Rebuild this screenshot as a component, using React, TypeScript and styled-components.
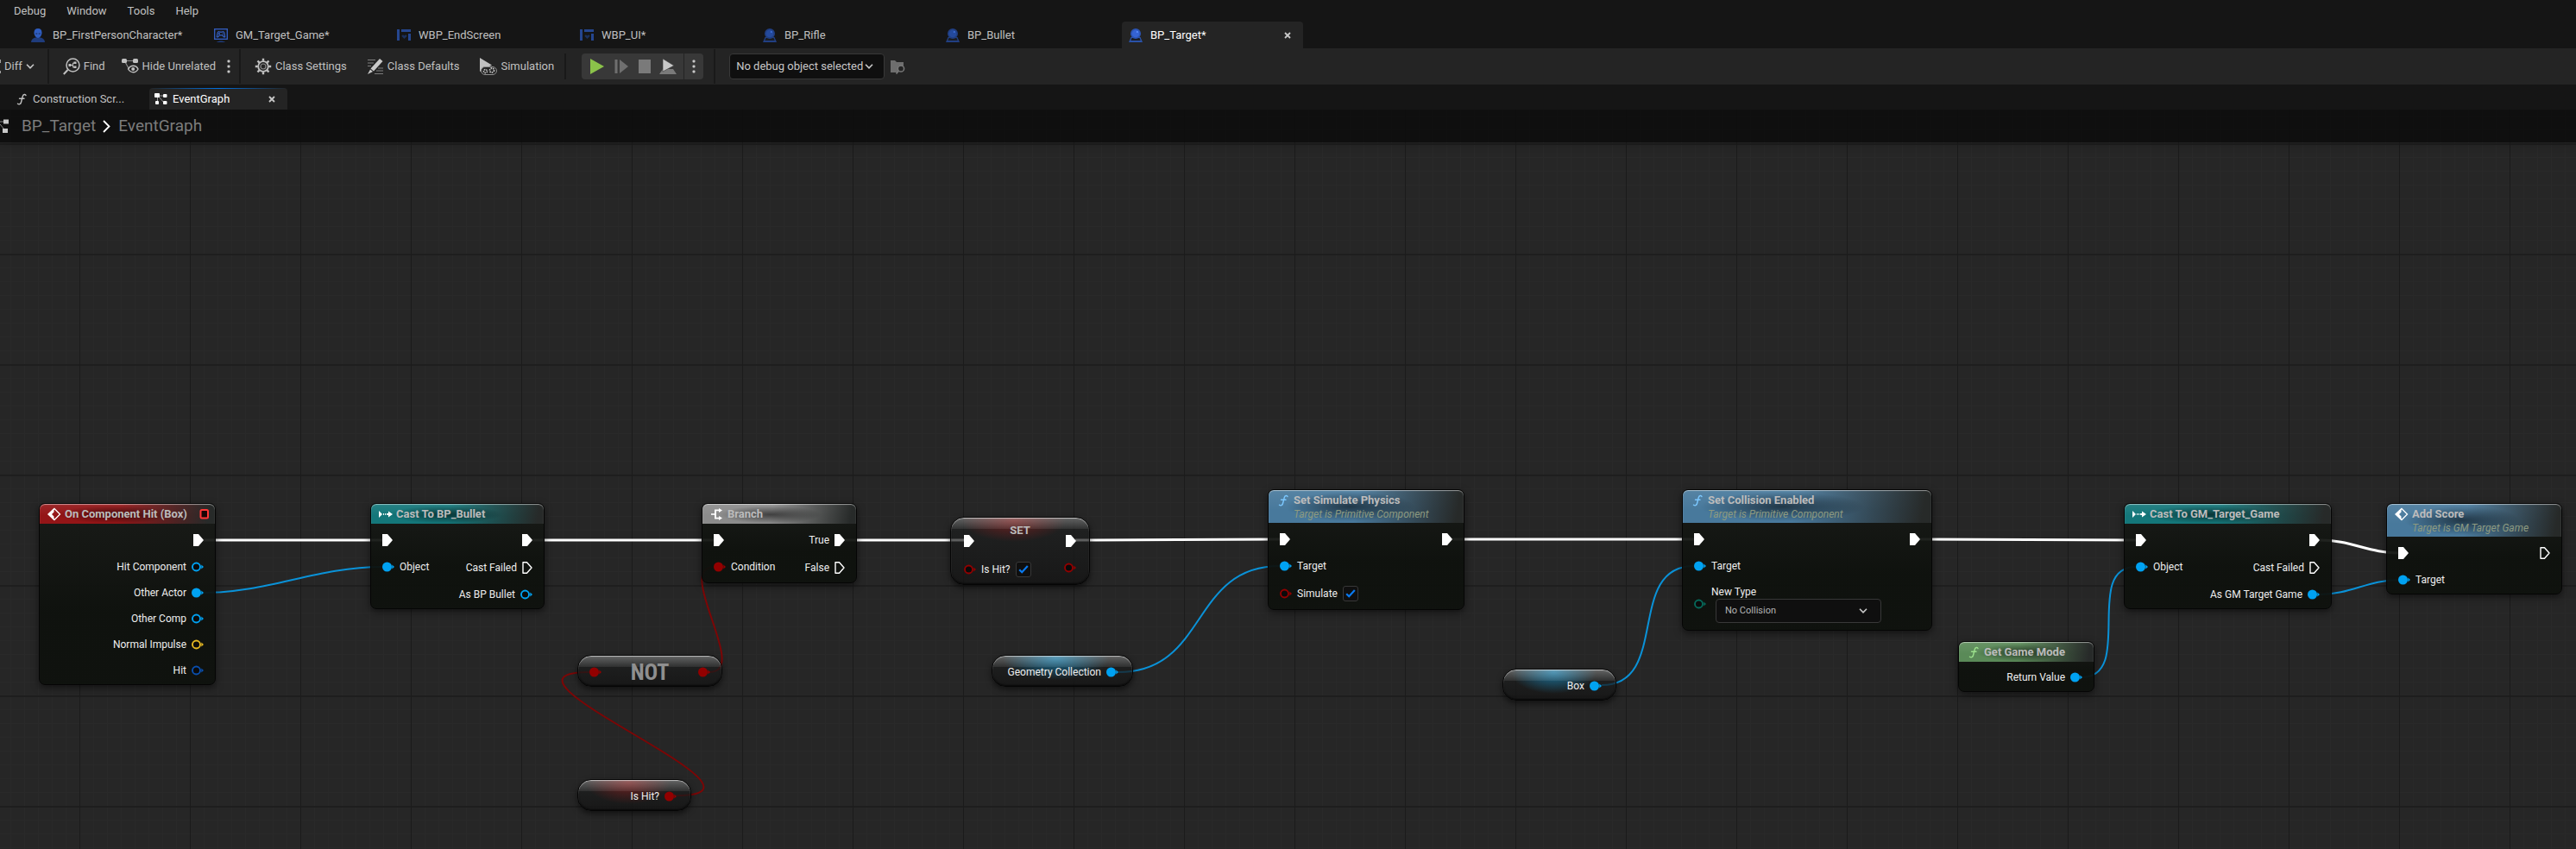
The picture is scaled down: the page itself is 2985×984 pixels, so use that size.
import React, { useId, useState } from "react";
import styled, { createGlobalStyle, css } from "styled-components";

const GlobalStyle = createGlobalStyle`
  *, *::before, *::after { box-sizing: border-box; }
  body {
    margin: 0;
    background: #151515;
    color: #c0c0c0;
    font: 13px/16px Roboto, "Liberation Sans", sans-serif;
  }
  button, input, select { font: inherit; color: inherit; }
`;

/* ---------- shell ---------- */

const Page = styled.div`
  display: flex;
  flex-direction: column;
  min-height: 100vh;
`;

const PlainButton = styled.button`
  display: flex;
  align-items: center;
  flex: none;
  padding: 0;
  border: 0;
  background: none;
  white-space: nowrap;
  cursor: pointer;
`;

const MenuBar = styled.nav`
  display: flex;
  align-items: center;
  gap: 24px;
  height: 25px;
  padding-left: 16px;
`;

const DocumentTabs = styled.div`
  display: flex;
  gap: 2px;
  height: 31px;
  padding-left: 28px;
`;

const DocumentTab = styled.div<{ $active?: boolean }>`
  display: flex;
  align-items: center;
  justify-content: space-between;
  width: 210px;
  padding: 0 14px 0 8px;
  border-radius: 4px 4px 0 0;
  background: ${(p) => (p.$active ? "#242424" : "transparent")};
  color: ${(p) => (p.$active ? "#ffffff" : "#c0c0c0")};
`;

const DocumentTabButton = styled(PlainButton)`
  gap: 9px;
`;

const Toolbar = styled.div`
  display: flex;
  align-items: center;
  height: 42px;
  background: #242424;
`;

const Divider = styled.span<{ $short?: boolean }>`
  flex: none;
  width: 2px;
  height: ${(p) => (p.$short ? 30 : 40)}px;
  background: #191919;
`;

const ToolGroup = styled.div<{ $gap: number; $left?: number; $right?: number }>`
  display: flex;
  align-items: center;
  gap: ${(p) => p.$gap}px;
  padding: 0 ${(p) => p.$right ?? 0}px 0 ${(p) => p.$left ?? 0}px;
`;

const ToolButton = styled(PlainButton)`
  gap: 4px;
`;

const PlayGroup = styled.div`
  display: flex;
  align-items: center;
  height: 30px;
  margin: 0 12px 0 18px;
  border-radius: 4px;
  background: #383838;
`;

const PlayButtons = styled.div`
  display: flex;
  align-items: center;
  gap: 8px;
  width: 118px;
  height: 30px;
  padding-left: 8px;
`;

const PlayMore = styled(PlainButton)`
  justify-content: center;
  width: 23px;
  height: 30px;
  border-left: 1px solid #242424;
`;

const SelectBox = styled.span<{ $compact?: boolean }>`
  display: grid;
  align-items: center;
  flex: none;
  width: ${(p) => (p.$compact ? 192 : 180)}px;

  > * { grid-area: 1 / 1; }
  > svg {
    justify-self: end;
    margin-right: ${(p) => (p.$compact ? 16 : 13)}px;
    pointer-events: none;
  }
`;

const Select = styled.select<{ $compact?: boolean }>`
  appearance: none;
  width: 100%;
  height: ${(p) => (p.$compact ? 28 : 30)}px;
  padding: 0 0 0 ${(p) => (p.$compact ? 10 : 7)}px;
  border: 1px solid #383838;
  border-radius: 4px;
  background: #0f0f0f;
  color: ${(p) => (p.$compact ? "#b4b4b4" : "#c8c8c8")};
  font-size: ${(p) => (p.$compact ? 11 : 13)}px;
`;

const GraphTabs = styled.div`
  display: flex;
  align-items: flex-end;
  gap: 2px;
  height: 29px;
  padding-left: 11px;
`;

const GraphTab = styled.div<{ $active?: boolean }>`
  display: flex;
  align-items: center;
  justify-content: space-between;
  width: 160px;
  height: 25px;
  padding: 0 14px 0 6px;
  border-radius: 4px 4px 0 0;
  color: ${(p) => (p.$active ? "#ffffff" : "#c0c0c0")};
  ${(p) =>
    p.$active &&
    css`
      background:
        linear-gradient(to right, transparent, #0070e0 50%, transparent) top / 100% 1px no-repeat,
        #242424;
    `}
`;

const GraphTabButton = styled(PlainButton)`
  gap: 5px;
`;

/* ---------- graph ---------- */

const Graph = styled.main`
  position: relative;
  flex: 1;
  overflow: hidden;
  background:
    linear-gradient(to right, #1b1b1b 1px, transparent 1px) 92px 0 / 128px 128px,
    linear-gradient(to bottom, #1e1e1e 2px, transparent 2px) 0 39px / 128px 128px,
    linear-gradient(to right, #292929 1px, transparent 1px) 12px 0 / 16px 16px,
    linear-gradient(to bottom, #292929 1px, transparent 1px) 0 7px / 16px 16px,
    #262626;
`;

const Breadcrumb = styled.nav`
  display: flex;
  align-items: center;
  height: 38px;
  background: rgba(13, 13, 13, 0.9);
  box-shadow: 0 1px 12px rgba(0, 0, 0, 0.2);
  font-size: 19px;
  line-height: 22px;

  a {
    color: #7c7c7c;
    text-decoration: none;
  }
  a:first-of-type { padding-left: 15px; }
  > svg:last-of-type { margin: 0 9px 0 8px; }
`;

const Wires = styled.svg`
  position: absolute;
  inset: 0;
  width: 100%;
  height: 100%;
  pointer-events: none;
`;

type Box = { $x: number; $y: number; $w: number };

const onCanvas = css<Box>`
  position: absolute;
  left: ${(p) => p.$x}px;
  top: ${(p) => p.$y}px;
  width: ${(p) => p.$w}px;
  border: 1px solid #050505;
  color: #eeeeee;
  font-size: 12px;
`;

const NodeFrame = styled.article<Box>`
  ${onCanvas}
  padding-bottom: 1px;
  border-radius: 7px;
  background: linear-gradient(to bottom, rgba(24, 26, 23, 0.93), rgba(14, 17, 13, 0.95) 60%);
  box-shadow: 0 3px 8px rgba(0, 0, 0, 0.5);
`;

const NodeHeader = styled.header<{ $tint: string; $tall?: boolean }>`
  display: flex;
  align-items: flex-start;
  gap: 4px;
  height: ${(p) => (p.$tall ? 38 : 23)}px;
  padding: 4px 6px 0 9px;
  border-radius: 6px 6px 0 0;
  background:
    radial-gradient(closest-side, rgba(0, 0, 0, 0.55), transparent) 20px 2px / 66% 90% no-repeat,
    linear-gradient(100deg, transparent 45%, #272a29 96%),
    linear-gradient(to bottom, rgba(255, 255, 255, 0.08), transparent 60%),
    ${(p) => p.$tint};
  box-shadow: inset 0 1px 1px rgba(255, 255, 255, 0.5);

  > svg { flex: none; }
`;

const Titles = styled.div`
  flex: 1;
  white-space: nowrap;
`;

const Title = styled.h2`
  margin: 0;
  color: #bcbcbc;
  font-size: 13px;
  font-weight: 700;
  line-height: 16px;
`;

const Subtitle = styled.p`
  margin: 0;
  color: #8d9a80;
  font-size: 12px;
  font-style: italic;
  line-height: 16px;
`;

const NodeBody = styled.div<{ $pad?: number }>`
  display: flex;
  justify-content: space-between;
  padding: 3px ${(p) => p.$pad ?? 13}px 0;
`;

const PinColumn = styled.div<{ $out?: boolean }>`
  display: flex;
  flex-direction: column;
  align-items: ${(p) => (p.$out ? "flex-end" : "flex-start")};
`;

const PinRow = styled.div<{ $h: number }>`
  display: flex;
  align-items: center;
  gap: 6px;
  height: ${(p) => p.$h}px;
  white-space: nowrap;

  > svg { flex: none; }
`;

const PillFrame = styled.article<Box & { $glow: string }>`
  ${onCanvas}
  border-radius: 16px;
  background:
    linear-gradient(to bottom, rgba(255, 255, 255, 0.3), rgba(255, 255, 255, 0.08)) top / 100% 13px no-repeat,
    radial-gradient(closest-side, ${(p) => p.$glow}, transparent) 30% -22px / 76% 50px no-repeat,
    linear-gradient(to bottom, rgba(30, 32, 32, 0.66), rgba(20, 20, 20, 0.8));
  box-shadow:
    inset 0 1px 1px rgba(255, 255, 255, 0.6),
    inset 0 -1px 2px rgba(0, 0, 0, 0.7),
    0 3px 7px rgba(0, 0, 0, 0.55);
`;

const PillRow = styled.div<{ $spread?: boolean }>`
  display: flex;
  align-items: center;
  justify-content: ${(p) => (p.$spread ? "space-between" : "flex-end")};
  gap: 6px;
  height: 35px;
  padding: 2px ${(p) => (p.$spread ? 13 : 16)}px 0;
`;

const Operator = styled.strong`
  color: #8f8f8f;
  font: 700 26px/28px "Roboto Condensed", "Liberation Sans Narrow", Roboto, sans-serif;
`;

const SetTitle = styled.h2`
  height: 8px;
  margin: 0;
  padding-top: 7px;
  color: #bcbcbc;
  font-size: 13px;
  font-weight: 700;
  line-height: 16px;
  text-align: center;
`;

const CheckBoxFrame = styled.span`
  display: grid;
  place-items: center;

  > * { grid-area: 1 / 1; }
  > svg { pointer-events: none; }
  > input:not(:checked) + svg { visibility: hidden; }
`;

const CheckInput = styled.input`
  appearance: none;
  width: 18px;
  height: 18px;
  margin: 0;
  border: 1px solid #383838;
  border-radius: 3px;
  background: #0f0f0f;
`;

const FieldColumn = styled.div`
  display: flex;
  flex-direction: column;

  label { line-height: 15px; }
  > span { margin-left: 5px; }
`;

/* ---------- icons ---------- */

const PersonIcon = () => (
  <svg width="16" height="16" viewBox="0 0 16 16">
    <path d="M0 16c0-3 2-4.500 5-5.500h6c3 1 5 2.500 5 5.500z" fill="#1f3c7c" />
    <path d="M8 0c3 0 4.500 2 4.500 4.800C12.500 8 10.500 11 8 11S3.500 8 3.500 4.800C3.500 2 5 0 8 0z" fill="#2f5dc0" />
    <path d="M5.300 5.500h2v1h-2zM8.700 5.500h2v1h-2z" fill="#17294f" />
  </svg>
);

const GameModeIcon = () => (
  <svg width="16" height="16" viewBox="0 0 16 16">
    <rect x=".7" y=".7" width="14.600" height="11.600" fill="none" stroke="#3560c4" strokeWidth="1.300" />
    <path d="M3.300 9.800l.9-5c.3-1.200 1.500-1.400 2.300-.6h3c.8-.8 2-.6 2.300.6l.9 5c-1 .6-1.900-.2-2.700-1.900H6c-.8 1.700-1.700 2.500-2.700 1.900z" fill="none" stroke="#3560c4" strokeWidth="1.200" />
    <path d="M5 6h2M6 5v2M9.500 6h1.200" stroke="#3560c4" />
    <path d="M3 16c2-2 8-2 10 0z" fill="#1f3c7c" />
  </svg>
);

const WidgetIcon = () => (
  <svg width="16" height="16" viewBox="0 0 16 16">
    <path d="M0 1h3v13H0zM5 1h11v3H5zM13 6h3v8h-3z" fill="#25468f" />
    <path d="M8.500 12L5.500 9c0-1.500 2-2 3-.6 1-1.400 3-.9 3 .6z" fill="#1b305c" />
  </svg>
);

const ActorIcon = ({ active }: { active?: boolean }) => (
  <svg width="16" height="16" viewBox="0 0 16 16">
    <path d="M2.500 10h11l2.500 6H0z" fill={active ? "#2a52a8" : "#213f82"} />
    <path d="M3.500 11h9l1.200 3H2.300z" fill="#1a1d24" />
    <circle cx="8" cy="6" r="6" fill={active ? "#2b54b4" : "#213f82"} />
    <circle cx="8" cy="6" r="4.300" fill={active ? "#3a6ae0" : "#2750a8"} opacity=".7" />
    <circle cx="9.800" cy="4" r="1" fill={active ? "#5f92ff" : "#3f72dd"} />
  </svg>
);

const CloseIcon = () => (
  <svg width="8" height="8" viewBox="0 0 8 8">
    <path d="M1 1l6 6M7 1L1 7" stroke="#c8c8c8" strokeWidth="1.800" />
  </svg>
);

const ChevronDown = () => (
  <svg width="10" height="6" viewBox="0 0 10 6">
    <path d="M1 .8l4 4 4-4" fill="none" stroke="#c8c8c8" strokeWidth="1.600" />
  </svg>
);

const DotsIcon = () => (
  <svg width="4" height="16" viewBox="0 0 4 16">
    <g fill="#c8c8c8">
      <rect x=".5" y=".5" width="3" height="3" rx="1" />
      <rect x=".5" y="6.500" width="3" height="3" rx="1" />
      <rect x=".5" y="12.500" width="3" height="3" rx="1" />
    </g>
  </svg>
);

const FindIcon = () => (
  <svg width="20" height="20" viewBox="0 0 20 20" fill="none" stroke="#c0c0c0">
    <circle cx="11.500" cy="8.500" r="7.500" strokeWidth="1.500" />
    <path d="M5.500 14L.8 19" strokeWidth="2" />
    <path d="M9 8.500h2M11.500 6v5M11.500 6H13M11.500 11H13" />
    <path d="M6.500 7h3v3h-3zM12.500 4.500h3v2.500h-3zM12.500 9.500h3V12h-3z" fill="#c0c0c0" stroke="none" />
  </svg>
);

const HideIcon = () => (
  <svg width="20" height="20" viewBox="0 0 20 20" fill="none" stroke="#c0c0c0">
    <path d="M4 3.500h12M3.500 4l5 9" strokeWidth="1.200" stroke="#8a8a8a" />
    <rect x="0" y="1" width="6" height="5" rx="1.500" fill="#c0c0c0" stroke="none" />
    <rect x="13" y="1" width="6" height="5" rx="1.500" fill="#c0c0c0" stroke="none" />
    <path d="M7.500 13c3-5 9-5 11.500 0-2.500 5-8.500 5-11.500 0z" strokeWidth="1.400" />
    <circle cx="13.200" cy="13" r="2" fill="#c0c0c0" stroke="none" />
  </svg>
);

const GearIcon = () => (
  <svg width="20" height="20" viewBox="0 0 20 20" fill="none" stroke="#c0c0c0">
    <circle cx="10" cy="10" r="5.800" strokeWidth="1.800" />
    <circle cx="10" cy="10" r="3" stroke="#8a8a8a" strokeWidth="1.200" />
    <path
      d="M10 .8v3M10 16.200v3M.8 10h3M16.200 10h3M3.500 3.500l2.100 2.100M14.400 14.400l2.100 2.100M3.500 16.500l2.100-2.100M14.400 5.600l2.100-2.100"
      strokeWidth="2.400"
    />
  </svg>
);

const DefaultsIcon = () => (
  <svg width="20" height="20" viewBox="0 0 20 20">
    <path d="M1 2.500h9M1 6h7M1 9.500h4M13 12h6M11 15h8M9 18.500h10" stroke="#7d7d7d" />
    <path d="M15 1l3.500 3L8 15.500 4.500 12.500zM4 13.500L7 16l-6 3z" fill="#c8c8c8" />
  </svg>
);

const SimulationIcon = () => (
  <svg width="21" height="20" viewBox="0 0 21 20">
    <path d="M1 0l14 8.500L6 13l-5 3z" fill="#c0c0c0" />
    <rect x="2.500" y="10.500" width="18" height="9" rx="4.500" fill="#242424" stroke="#8f8f8f" />
    <circle cx="7.500" cy="15.500" r="2" fill="none" stroke="#c0c0c0" strokeWidth="1.600" strokeDasharray="1.500 .8" />
    <circle cx="15" cy="14.500" r="2.500" fill="none" stroke="#c0c0c0" strokeWidth="1.800" strokeDasharray="1.600 .9" />
  </svg>
);

const FolderSearchIcon = () => (
  <svg width="17" height="17" viewBox="0 0 17 17">
    <path d="M0 1h5l2 2h8v4H9v8H0z" fill="#6e6e6e" />
    <circle cx="12" cy="10.500" r="3.600" fill="#242424" stroke="#7a7a7a" strokeWidth="1.500" />
    <path d="M9.500 13l-3 3.500" stroke="#7a7a7a" strokeWidth="1.600" />
  </svg>
);

const FunctionIcon = ({ color }: { color: string }) => (
  <svg width="16" height="16" viewBox="0 0 16 16" fill="none" stroke={color} strokeWidth="1.400" strokeLinecap="round">
    <path d="M13 3.500C12.500 2 10 2 9.300 4.500L7.500 11.500C7 13.800 5 14.500 3.500 13.300" />
    <path d="M5.500 7.300h5.500" />
  </svg>
);

const GraphIcon = () => (
  <svg width="16" height="16" viewBox="0 0 16 16" fill="#ffffff">
    <path d="M4 4h8M5 5l6 7M3.500 5v6" stroke="#9a9a9a" fill="none" />
    <rect x="0" y="1" width="6" height="5" rx="1" />
    <rect x="10" y="2" width="4.500" height="4" rx="1" />
    <rect x="1" y="10" width="4" height="4" rx="1" />
    <rect x="10" y="10" width="4.500" height="4" rx="1" />
  </svg>
);

const EventIcon = () => (
  <svg width="16" height="16" viewBox="0 0 16 16">
    <path d="M8 1.500L14.500 8 8 14.500 1.500 8z" fill="none" stroke="#fff" strokeWidth="1.300" />
    <path d="M7.500 1L0 8l7.500 7v-4.500L5 8l2.500-2.500z" fill="#fff" />
  </svg>
);

const CastIcon = () => (
  <svg width="16" height="16" viewBox="0 0 16 16" fill="#fff">
    <path d="M0 4l4 4-4 4zM5 7h1v2H5zM7 7h1v2H7zM9 7h2V4.500L16 8l-5 3.500V9H9z" />
  </svg>
);

const BranchIcon = () => (
  <svg width="16" height="16" viewBox="0 0 16 16" fill="#fff">
    <path d="M1 7.200h5v1.600H1z" />
    <path d="M5 2.500h5V1l4 2.500L10 6V4.200H7v7.600h3V10l4 2.500-4 2.500v-1.500H5z" />
  </svg>
);

/* ---------- pins ---------- */

const BLUE = "#00a2f2";
const RED = "#920000";

const ExecPin = ({ open }: { open?: boolean }) => (
  <svg width="12" height="14" viewBox="0 0 12 14">
    <path
      d={open ? "M1 .8h4.500L11 7l-5.500 6.200H1z" : "M0 0h6l6 7-6 7H0z"}
      fill={open ? "none" : "#fff"}
      stroke={open ? "#fff" : "none"}
      strokeWidth="1.400"
      strokeLinejoin="round"
    />
  </svg>
);

const DataPin = ({ color, open }: { color: string; open?: boolean }) => (
  <svg width="14" height="12" viewBox="0 0 14 12">
    <circle
      cx="5.500"
      cy="6"
      r={open ? 4.500 : 5.500}
      fill={open ? "#0a0a0a" : color}
      stroke={open ? color : "none"}
      strokeWidth="1.900"
    />
    <path d="M11.300 3.500L14 6l-2.700 2.500z" fill={color} />
  </svg>
);

const Check = ({ id }: { id: string }) => {
  const [checked, setChecked] = useState(true);
  return (
    <CheckBoxFrame>
      <CheckInput id={id} type="checkbox" checked={checked} onChange={(e) => setChecked(e.target.checked)} />
      <svg width="12" height="10" viewBox="0 0 12 10">
        <path d="M1.200 5.200l3 3L10.800 1" fill="none" stroke="#0a7af0" strokeWidth="2.200" />
      </svg>
    </CheckBoxFrame>
  );
};

const ExecIn = () => (
  <PinRow $h={32}>
    <ExecPin />
  </PinRow>
);

const ExecOut = ({ label, open }: { label?: string; open?: boolean }) => (
  <PinRow $h={32}>
    {label}
    <ExecPin open={open} />
  </PinRow>
);

const DataIn = ({ label, color = BLUE }: { label: string; color?: string }) => (
  <PinRow $h={30}>
    <DataPin color={color} />
    {label}
  </PinRow>
);

const DataOut = ({ label, color = BLUE, open }: { label?: string; color?: string; open?: boolean }) => (
  <PinRow $h={30}>
    {label}
    <DataPin color={color} open={open} />
  </PinRow>
);

const BoolIn = ({ label }: { label: string }) => {
  const id = useId();
  return (
    <PinRow $h={34}>
      <DataPin color={RED} open />
      <label htmlFor={id}>{label}</label>
      <Check id={id} />
    </PinRow>
  );
};

/* ---------- nodes ---------- */

type NodeProps = {
  x: number;
  y: number;
  w: number;
  tint: string;
  icon: React.ReactNode;
  title: string;
  subtitle?: string;
  badge?: React.ReactNode;
  inputs?: React.ReactNode;
  outputs?: React.ReactNode;
};

const GraphNode = ({ x, y, w, tint, icon, title, subtitle, badge, inputs, outputs }: NodeProps) => (
  <NodeFrame $x={x} $y={y} $w={w}>
    <NodeHeader $tint={tint} $tall={!!subtitle}>
      {icon}
      <Titles>
        <Title>{title}</Title>
        {subtitle && <Subtitle>{subtitle}</Subtitle>}
      </Titles>
      {badge}
    </NodeHeader>
    <NodeBody>
      <PinColumn>{inputs}</PinColumn>
      <PinColumn $out>{outputs}</PinColumn>
    </NodeBody>
  </NodeFrame>
);

type VariableProps = { x: number; y: number; w: number; label: string; color: string; glow: string };

const VariableNode = ({ x, y, w, label, color, glow }: VariableProps) => (
  <PillFrame $x={x} $y={y} $w={w} $glow={glow}>
    <PillRow>
      {label}
      <DataPin color={color} />
    </PillRow>
  </PillFrame>
);

const DelegateBadge = () => (
  <svg width="12" height="16" viewBox="0 0 12 16">
    <rect x="1.500" y="3" width="8.500" height="9.500" rx="1.500" fill="#1a0505" stroke="#ff3636" strokeWidth="2" />
  </svg>
);

const RED_TINT = "#941517";
const TEAL_TINT = "#14777a";
const BLUE_TINT = "#48799c";
const GREEN_TINT = "#5a8a58";
const GREY_TINT = "#8c8c8c";
const RED_GLOW = "rgba(160, 30, 30, 0.6)";
const BLUE_GLOW = "rgba(25, 135, 185, 0.8)";

/* Each wire: start point, end point, length of the horizontal tangents. */
type Wire = [number, number, number, number, number];

const execWires: Wire[] = [
  [235, 499, 444, 499, 60],
  [616, 499, 828, 499, 60],
  [978, 499, 1118, 499, 40],
  [1246, 499, 1484, 498, 60],
  [1682, 498, 1964, 498, 60],
  [2224, 498, 2476, 499, 60],
  [2688, 499, 2781, 514, 36],
];
const blueWires: Wire[] = [
  [235, 560, 443, 530, 78],
  [1296, 652, 1483, 529, 104],
  [1856, 667, 1963, 529, 80],
  [2412, 658, 2475, 530, 62],
  [2688, 562, 2780, 545, 36],
];
const redWires: Wire[] = [
  [822, 652, 828, 530, 48],
  [784, 795, 683, 652, 140],
];

const wirePath = ([x1, y1, x2, y2, t]: Wire) => `M${x1} ${y1}C${x1 + t} ${y1} ${x2 - t} ${y2} ${x2} ${y2}`;

const documents = [
  { name: "BP_FirstPersonCharacter*", icon: <PersonIcon /> },
  { name: "GM_Target_Game*", icon: <GameModeIcon /> },
  { name: "WBP_EndScreen", icon: <WidgetIcon /> },
  { name: "WBP_UI*", icon: <WidgetIcon /> },
  { name: "BP_Rifle", icon: <ActorIcon /> },
  { name: "BP_Bullet", icon: <ActorIcon /> },
  { name: "BP_Target*", icon: <ActorIcon active />, active: true },
];

export default function App() {
  const collisionId = useId();
  return (
    <Page>
      <GlobalStyle />
      <MenuBar>
        {["Debug", "Window", "Tools", "Help"].map((m) => (
          <PlainButton key={m}>{m}</PlainButton>
        ))}
      </MenuBar>

      <DocumentTabs>
        {documents.map((d) => (
          <DocumentTab key={d.name} $active={d.active}>
            <DocumentTabButton>
              {d.icon}
              {d.name}
            </DocumentTabButton>
            {d.active && (
              <PlainButton aria-label="Close tab">
                <CloseIcon />
              </PlainButton>
            )}
          </DocumentTab>
        ))}
      </DocumentTabs>

      <Toolbar>
        <ToolGroup $gap={0} $right={15}>
          <ToolButton>
            <svg width="1" height="18" viewBox="0 0 1 18">
              <path d="M0 1h1v4H0zM0 14h1v3H0z" fill="#a0a0a0" />
            </svg>
            Diff
            <ChevronDown />
          </ToolButton>
        </ToolGroup>
        <Divider />
        <ToolGroup $gap={19} $left={16} $right={10}>
          <ToolButton>
            <FindIcon />
            Find
          </ToolButton>
          <ToolGroup $gap={13}>
            <ToolButton>
              <HideIcon />
              Hide Unrelated
            </ToolButton>
            <PlainButton aria-label="More filters">
              <DotsIcon />
            </PlainButton>
          </ToolGroup>
        </ToolGroup>
        <Divider />
        <ToolGroup $gap={23} $left={16} $right={12}>
          <ToolButton>
            <GearIcon />
            Class Settings
          </ToolButton>
          <ToolButton>
            <DefaultsIcon />
            Class Defaults
          </ToolButton>
          <ToolButton>
            <SimulationIcon />
            Simulation
          </ToolButton>
        </ToolGroup>
        <Divider $short />
        <PlayGroup>
          <PlayButtons>
            <PlainButton aria-label="Play">
              <svg width="20" height="18" viewBox="0 0 20 18">
                <path d="M2 0l16 9-16 9z" fill="#8bc24a" />
              </svg>
            </PlainButton>
            <PlainButton aria-label="Step">
              <svg width="20" height="18" viewBox="0 0 20 18">
                <path d="M2.500 1h3v16h-3zM8 1l10 8-10 8z" fill="#6f6f6f" />
              </svg>
            </PlainButton>
            <PlainButton aria-label="Stop">
              <svg width="18" height="18" viewBox="0 0 18 18">
                <rect x="2" y="1" width="14" height="16" fill="#7a7a7a" />
              </svg>
            </PlainButton>
            <PlainButton aria-label="Eject">
              <svg width="20" height="18" viewBox="0 0 20 18">
                <path d="M4 12l-4 6h20l-4-6z" fill="#7a7a7a" />
                <path d="M4 0l13 8-13 7z" fill="#c8c8c8" stroke="#383838" strokeWidth=".6" />
              </svg>
            </PlainButton>
          </PlayButtons>
          <PlayMore aria-label="Play options">
            <DotsIcon />
          </PlayMore>
        </PlayGroup>
        <Divider />
        <ToolGroup $gap={7} $left={16} $right={16}>
          <SelectBox>
            <Select aria-label="Debug object">
              <option>No debug object selected</option>
            </Select>
            <ChevronDown />
          </SelectBox>
          <PlainButton aria-label="Browse debug object">
            <FolderSearchIcon />
          </PlainButton>
        </ToolGroup>
      </Toolbar>

      <GraphTabs>
        <GraphTab>
          <GraphTabButton>
            <FunctionIcon color="#c0c0c0" />
            Construction Scr...
          </GraphTabButton>
        </GraphTab>
        <GraphTab $active>
          <GraphTabButton>
            <GraphIcon />
            EventGraph
          </GraphTabButton>
          <PlainButton aria-label="Close graph">
            <CloseIcon />
          </PlainButton>
        </GraphTab>
      </GraphTabs>

      <Graph>
        <Breadcrumb>
          <svg width="10" height="16" viewBox="0 0 10 16">
            <path d="M0 3h5M0 6l5 6" stroke="#8a8a8a" />
            <path d="M4 .5h6v5H4zM3 11h6v5H3z" fill="#c8c8c8" />
          </svg>
          <a href="#blueprint">BP_Target</a>
          <svg width="9" height="15" viewBox="0 0 9 15">
            <path d="M1 1l6.500 6.500L1 14" fill="none" stroke="#fff" strokeWidth="1.800" />
          </svg>
          <a href="#graph">EventGraph</a>
        </Breadcrumb>

        <Wires fill="none">
          <g stroke="#ffffff" strokeWidth="3">
            {execWires.map((w) => (
              <path key={w.join()} d={wirePath(w)} />
            ))}
          </g>
          <g stroke="#0a92d8" strokeWidth="2">
            {blueWires.map((w) => (
              <path key={w.join()} d={wirePath(w)} />
            ))}
          </g>
          <g stroke="#7c0606" strokeWidth="2">
            {redWires.map((w) => (
              <path key={w.join()} d={wirePath(w)} />
            ))}
          </g>
        </Wires>

        <GraphNode
          x={45}
          y={456}
          w={205}
          tint={RED_TINT}
          icon={<EventIcon />}
          title="On Component Hit (Box)"
          badge={<DelegateBadge />}
          outputs={
            <>
              <ExecOut />
              <DataOut label="Hit Component" open />
              <DataOut label="Other Actor" />
              <DataOut label="Other Comp" open />
              <DataOut label="Normal Impulse" color="#e5b822" open />
              <DataOut label="Hit" color="#0a4fae" open />
            </>
          }
        />
        <GraphNode
          x={429}
          y={456}
          w={202}
          tint={TEAL_TINT}
          icon={<CastIcon />}
          title="Cast To BP_Bullet"
          inputs={
            <>
              <ExecIn />
              <DataIn label="Object" />
            </>
          }
          outputs={
            <>
              <ExecOut />
              <ExecOut label="Cast Failed" open />
              <DataOut label="As BP Bullet" open />
            </>
          }
        />
        <GraphNode
          x={813}
          y={456}
          w={180}
          tint={GREY_TINT}
          icon={<BranchIcon />}
          title="Branch"
          inputs={
            <>
              <ExecIn />
              <DataIn label="Condition" color={RED} />
            </>
          }
          outputs={
            <>
              <ExecOut label="True" />
              <ExecOut label="False" open />
            </>
          }
        />
        <PillFrame $x={1101} $y={472} $w={162} $glow={RED_GLOW}>
          <SetTitle>SET</SetTitle>
          <NodeBody $pad={15}>
            <PinColumn>
              <ExecIn />
              <BoolIn label="Is Hit?" />
            </PinColumn>
            <PinColumn $out>
              <ExecOut />
              <DataOut color={RED} open />
            </PinColumn>
          </NodeBody>
        </PillFrame>
        <PillFrame $x={669} $y={632} $w={168} $glow="transparent">
          <PillRow $spread>
            <DataPin color={RED} />
            <Operator>NOT</Operator>
            <DataPin color={RED} />
          </PillRow>
        </PillFrame>
        <VariableNode x={669} y={776} w={132} label="Is Hit?" color={RED} glow={RED_GLOW} />
        <VariableNode x={1149} y={632} w={164} label="Geometry Collection" color={BLUE} glow={BLUE_GLOW} />
        <GraphNode
          x={1469}
          y={440}
          w={228}
          tint={BLUE_TINT}
          icon={<FunctionIcon color="#7cc8ff" />}
          title="Set Simulate Physics"
          subtitle="Target is Primitive Component"
          inputs={
            <>
              <ExecIn />
              <DataIn label="Target" />
              <BoolIn label="Simulate" />
            </>
          }
          outputs={<ExecOut />}
        />
        <VariableNode x={1741} y={648} w={132} label="Box" color={BLUE} glow={BLUE_GLOW} />
        <GraphNode
          x={1949}
          y={440}
          w={290}
          tint={BLUE_TINT}
          icon={<FunctionIcon color="#7cc8ff" />}
          title="Set Collision Enabled"
          subtitle="Target is Primitive Component"
          inputs={
            <>
              <ExecIn />
              <DataIn label="Target" />
              <PinRow $h={58}>
                <DataPin color="#06695a" open />
                <FieldColumn>
                  <label htmlFor={collisionId}>New Type</label>
                  <SelectBox $compact>
                    <Select id={collisionId} $compact>
                      <option>No Collision</option>
                    </Select>
                    <ChevronDown />
                  </SelectBox>
                </FieldColumn>
              </PinRow>
            </>
          }
          outputs={<ExecOut />}
        />
        <GraphNode
          x={2269}
          y={616}
          w={158}
          tint={GREEN_TINT}
          icon={<FunctionIcon color="#9be08c" />}
          title="Get Game Mode"
          outputs={<DataOut label="Return Value" />}
        />
        <GraphNode
          x={2461}
          y={456}
          w={241}
          tint={TEAL_TINT}
          icon={<CastIcon />}
          title="Cast To GM_Target_Game"
          inputs={
            <>
              <ExecIn />
              <DataIn label="Object" />
            </>
          }
          outputs={
            <>
              <ExecOut />
              <ExecOut label="Cast Failed" open />
              <DataOut label="As GM Target Game" />
            </>
          }
        />
        <GraphNode
          x={2765}
          y={456}
          w={204}
          tint={BLUE_TINT}
          icon={<EventIcon />}
          title="Add Score"
          subtitle="Target is GM Target Game"
          inputs={
            <>
              <ExecIn />
              <DataIn label="Target" />
            </>
          }
          outputs={<ExecOut open />}
        />
      </Graph>
    </Page>
  );
}
